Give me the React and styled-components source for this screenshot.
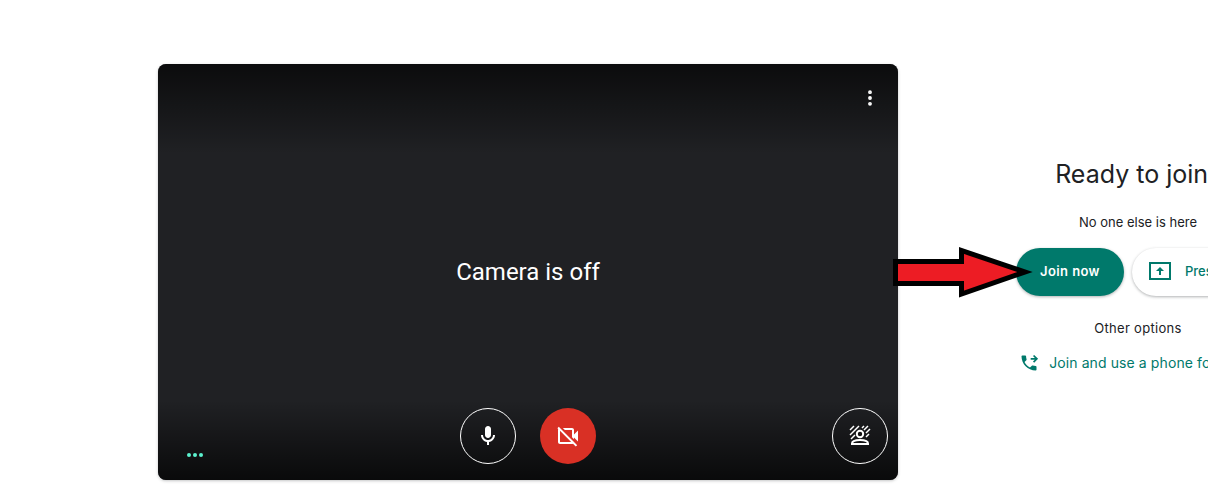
import React from 'react';
import styled, { createGlobalStyle } from 'styled-components';
import { MoreVertical } from 'lucide-react';

const GlobalStyle = createGlobalStyle`
  html, body {
    margin: 0;
    padding: 0;
    background: #fff;
    overflow: hidden;
  }
`;

const Page = styled.div`
  position: relative;
  width: 1208px;
  height: 500px;
  overflow: hidden;
  display: flex;
  align-items: flex-start;
  padding: 64px 0 0 158px;
  box-sizing: border-box;
  background: #fff;
  font-family: Inter, Roboto, "Liberation Sans", sans-serif;
`;

const Preview = styled.div`
  position: relative;
  flex: none;
  width: 740px;
  height: 416px;
  border-radius: 8px;
  background: #202124;
  box-shadow: 0 1px 3px rgba(60, 64, 67, 0.3);
  overflow: hidden;
  display: flex;
  align-items: center;
  justify-content: center;
  color: #fff;
`;

const Shade = styled.div`
  position: absolute;
  left: 0;
  right: 0;
  height: ${(p) => (p.$bottom ? 80 : 90)}px;
  ${(p) => (p.$bottom ? 'bottom: 0;' : 'top: 0;')}
  background: linear-gradient(
    ${(p) => (p.$bottom ? 'to top' : 'to bottom')},
    rgba(0, 0, 0, ${(p) => (p.$bottom ? 0.7 : 0.65)}),
    rgba(0, 0, 0, 0)
  );
`;

const CameraOff = styled.span`
  position: relative;
  font-size: 24px;
  line-height: 28px;
  font-family: Roboto, sans-serif;
`;

const MenuButton = styled.div`
  position: absolute;
  top: 22px;
  right: 16px;
  width: 24px;
  height: 24px;
  display: flex;
  align-items: center;
  justify-content: center;
`;

const Controls = styled.div`
  position: absolute;
  bottom: 16px;
  left: 302px;
  display: flex;
  gap: 24px;
`;

const RoundButton = styled.div`
  width: 56px;
  height: 56px;
  box-sizing: border-box;
  border-radius: 50%;
  display: flex;
  align-items: center;
  justify-content: center;
  border: ${(p) => (p.$danger ? 'none' : '1px solid #fff')};
  background: ${(p) => (p.$danger ? '#d93025' : 'transparent')};
`;

const EffectsButton = styled(RoundButton)`
  position: absolute;
  right: 10px;
  bottom: 16px;
`;

const Dots = styled.div`
  position: absolute;
  left: 29px;
  bottom: 23px;
  display: flex;
  gap: 2px;
`;

const Dot = styled.i`
  width: 4px;
  height: 4px;
  border-radius: 50%;
  background: #5cf2cf;
`;

const JoinPanel = styled.div`
  flex: none;
  width: 448px;
  margin: 94px 0 0 16px;
  display: flex;
  flex-direction: column;
  align-items: center;
`;

const Title = styled.h1`
  margin: 0;
  font-size: 25px;
  line-height: 32px;
  font-weight: 400;
  color: #202124;
  white-space: nowrap;
`;

const Note = styled.div`
  margin-top: ${(p) => p.$top}px;
  font-size: 13px;
  line-height: 20px;
  font-weight: 400;
  letter-spacing: ${(p) => p.$spacing || 0}px;
  color: #202124;
  white-space: nowrap;
`;

const Actions = styled.div`
  margin-top: 16px;
  display: flex;
  gap: 8px;
`;

const JoinButton = styled.div`
  width: 108px;
  height: 48px;
  box-sizing: border-box;
  padding-bottom: 2px;
  border-radius: 24px;
  background: #00796b;
  color: #fff;
  font-size: 13px;
  font-weight: 600;
  letter-spacing: 0.4px;
  display: flex;
  align-items: center;
  justify-content: center;
  box-shadow: 0 1px 3px rgba(60, 64, 67, 0.4);
`;

const PresentButton = styled.div`
  width: 128px;
  height: 48px;
  box-sizing: border-box;
  padding: 0 0 2px 16px;
  border-radius: 24px;
  background: #fff;
  color: #00796b;
  font-size: 13px;
  font-weight: 500;
  display: flex;
  align-items: center;
  gap: 13px;
  white-space: nowrap;
  box-shadow: 0 1px 3px rgba(60, 64, 67, 0.4);
`;

const PhoneLink = styled.div`
  margin-top: 15px;
  display: flex;
  align-items: center;
  gap: 10px;
  font-size: 14px;
  line-height: 20px;
  font-weight: 400;
  letter-spacing: 0.1px;
  color: #00796b;
  white-space: nowrap;
`;

const Arrow = styled.svg`
  position: absolute;
  left: 885px;
  top: 240px;
`;

const MicIcon = () => (
  <svg width="24" height="24" viewBox="0 0 24 24" fill="#fff">
    <path d="M12 14c1.66 0 3-1.34 3-3V5c0-1.66-1.34-3-3-3S9 3.34 9 5v6c0 1.66 1.34 3 3 3z" />
    <path d="M17 11c0 2.76-2.24 5-5 5s-5-2.24-5-5H5c0 3.53 2.61 6.43 6 6.92V21h2v-3.08c3.39-.49 6-3.39 6-6.92h-2z" />
  </svg>
);

const VideoOffIcon = () => (
  <svg width="24" height="24" viewBox="0 0 24 24" fill="#fff">
    <path d="M18 10.48V6c0-1.1-.9-2-2-2H6.83l2 2H16v7.17l2 2v-1.65l4 3.98v-11l-4 3.98zM16 16L6 6 4 4 2.81 2.81 1.39 4.22l.85.85C2.09 5.35 2 5.66 2 6v12c0 1.1.9 2 2 2h12c.34 0 .65-.09.93-.24l2.85 2.85 1.41-1.41L18 18 16 16zM4 18V6.83L15.17 18H4z" />
  </svg>
);

const EffectsIcon = () => (
  <svg width="24" height="24" viewBox="0 0 24 24" fill="none" stroke="#fff">
    <path
      strokeWidth="1.500"
      d="M2 6l4-4M2 11l9-9M3 15l4-4M14 4l2-2M16 6l4-4M18 9l4-4M18 13l3-3"
    />
    <circle cx="12" cy="10" r="3.200" strokeWidth="2" fill="#131314" />
    <path
      strokeWidth="2"
      fill="#131314"
      d="M4 20v-.5c0-2.500 4-3.500 8-3.500s8 1 8 3.500v.5z"
    />
  </svg>
);

const PresentIcon = () => (
  <svg width="24" height="24" viewBox="0 0 24 24" fill="none">
    <rect x="2" y="4" width="20" height="16" stroke="#00796b" strokeWidth="2" />
    <path d="M12 8l-4 4h3v4h2v-4h3z" fill="#00796b" />
  </svg>
);

const PhoneIcon = () => (
  <svg width="20" height="20" viewBox="0 0 24 24" fill="#00796b">
    <path d="M20 15.500c-1.250 0-2.450-.2-3.570-.57-.35-.11-.74-.03-1.020.24l-2.200 2.200c-2.830-1.440-5.150-3.750-6.590-6.590l2.200-2.210c.28-.26.36-.65.25-1C8.700 6.450 8.500 5.250 8.500 4c0-.55-.45-1-1-1H4c-.55 0-1 .45-1 1 0 9.390 7.610 17 17 17 .55 0 1-.45 1-1v-3.500c0-.55-.45-1-1-1z" />
    <path d="M14 7h7M17.500 3l4 4-4 4" fill="none" stroke="#00796b" strokeWidth="2" />
  </svg>
);

export default function App() {
  return (
    <>
      <GlobalStyle />
      <Page>
        <Preview>
          <Shade />
          <Shade $bottom />
          <CameraOff>Camera is off</CameraOff>
          <MenuButton>
            <MoreVertical size={20} color="#fff" strokeWidth={2.6} />
          </MenuButton>
          <Controls>
            <RoundButton>
              <MicIcon />
            </RoundButton>
            <RoundButton $danger>
              <VideoOffIcon />
            </RoundButton>
          </Controls>
          <EffectsButton>
            <EffectsIcon />
          </EffectsButton>
          <Dots>
            <Dot />
            <Dot />
            <Dot />
          </Dots>
        </Preview>
        <JoinPanel>
          <Title>Ready to join?</Title>
          <Note $top={22}>No one else is here</Note>
          <Actions>
            <JoinButton>Join now</JoinButton>
            <PresentButton>
              <PresentIcon />
              Present
            </PresentButton>
          </Actions>
          <Note $top={22} $spacing={0.3}>Other options</Note>
          <PhoneLink>
            <PhoneIcon />
            Join and use a phone for audio
          </PhoneLink>
        </JoinPanel>
        <Arrow width="150" height="65" viewBox="0 0 150 65">
          <path
            d="M10.500 21.500H76.500V10.500L140 32L76.500 54V43.500H10.500Z"
            fill="#ed1c24"
            stroke="#000"
            strokeWidth="5"
            strokeLinejoin="miter"
          />
        </Arrow>
      </Page>
    </>
  );
}
